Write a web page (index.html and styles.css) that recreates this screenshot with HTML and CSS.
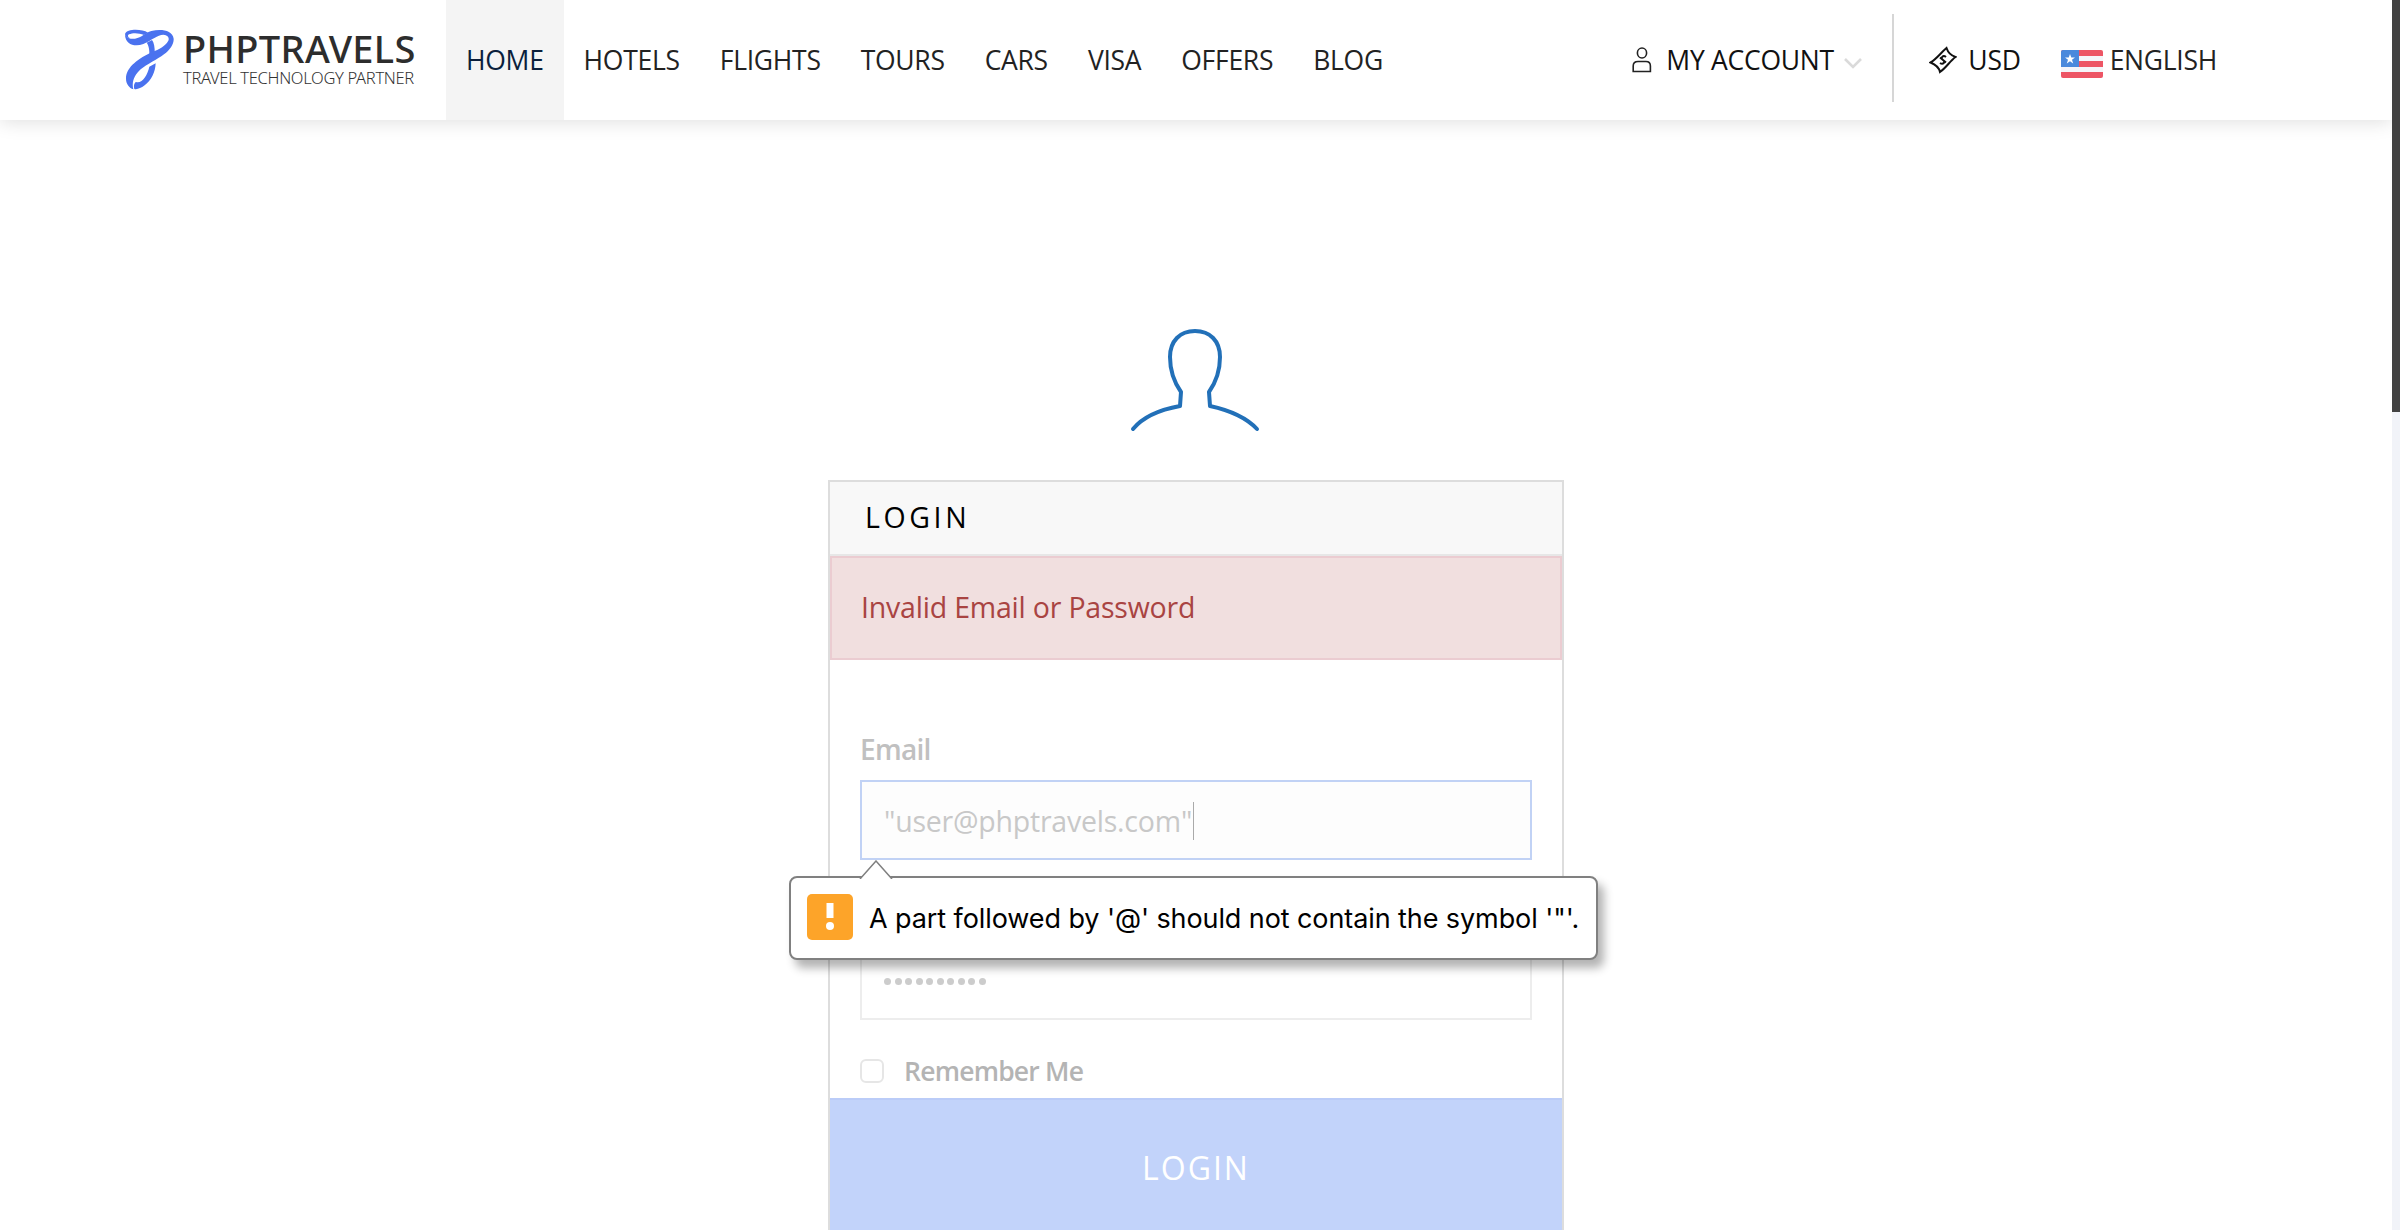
FILE: index.html
```html
<!DOCTYPE html>
<html lang="en">
<head>
<meta charset="utf-8">
<title>Login - PHPTRAVELS</title>
<link rel="stylesheet" href="styles.css">
</head>
<body>
<header class="topbar">
  <a class="logo">
    <svg class="logo-mark" viewBox="15 21 150 186" width="50" height="62" fill="#4a72ef">
      <path d="M15 38C16 68 45 76 70 66C97 54 112 38 130 38C146 39 149 50 144 58C136 72 118 82 96 91C58 108 18 135 18 170C18 186 28 198 40 202C34 180 44 158 62 142C80 127 112 112 132 97C150 84 162 66 161 50C158 24 122 20 94 27C75 32 66 47 45 50C32 51 22 49 15 38Z"/>
      <path d="M15 36C20 20 65 20 84 32L72 39C58 33 40 31 27 37C20 41 26 46 30 49C22 48 15 43 15 36Z"/>
      <path d="M80 62L96 54C102 62 105 76 104 95L88 102C89 82 86 70 80 62Z"/>
      <path d="M107 124C106 150 94 176 74 190C62 199 52 203 43 201C40 190 44 182 48 180C66 186 82 160 88 134Z"/>
    </svg>
    <span class="logo-words"><b class="logo-name">PHPTRAVELS</b><span class="logo-tag">TRAVEL TECHNOLOGY PARTNER</span></span>
  </a>
  <nav class="menu">
    <a class="active">HOME</a><a>HOTELS</a><a>FLIGHTS</a><a>TOURS</a><a>CARS</a><a>VISA</a><a>OFFERS</a><a>BLOG</a>
  </nav>
  <div class="tools">
    <a class="account">
      <svg width="20" height="26" viewBox="0 0 20 26" fill="none" stroke="#222" stroke-width="1.6"><ellipse cx="10" cy="6" rx="4.6" ry="5"/><path d="M1.2 24.5V19Q1.2 14.5 6 14.5H14Q18.4 14.5 18.4 19V24.5Z"/></svg>
      <span class="account-name">MY ACCOUNT</span>
      <svg class="chev" width="18" height="12" viewBox="0 0 18 12" fill="none" stroke="#dadada" stroke-width="2.600"><path d="M1 1L9 9L17 1"/></svg>
    </a>
    <a class="currency">
      <svg width="28" height="28" viewBox="0 0 28 28" fill="none" stroke="#111" stroke-width="2"><path d="M1.500 16.500C7 13.500 12 6.500 17.500 2C19 6.500 22 9.500 26.500 11C21 15 17 22 11 26C10 21.500 6.500 18.500 1.500 16.500Z"/><path d="M17 11C14 8.500 11 12 14 14S14 19 11 17M11 11.500L17 16.500"/></svg>
      <span>USD</span>
    </a>
    <a class="language">
      <svg width="42" height="28" viewBox="0 0 42 28"><rect width="42" height="28" rx="2" fill="#ed5565"/><path d="M18 6H42V11H18ZM0 17H42V22H0Z" fill="#f5f5f9"/><path d="M2 0H18V17H0V2Q0 0 2 0Z" fill="#4a89dc"/><path d="M9 4L10.300 7.500H14L11 9.800L12.200 13.500L9 11.300L5.800 13.500L7 9.800L4 7.500H7.700Z" fill="#fff"/></svg>
      <span>ENGLISH</span>
    </a>
  </div>
</header>
<main class="page">
  <svg class="avatar" width="132" height="108" viewBox="0 0 132 108" fill="none" stroke="#2270b8" stroke-width="4" stroke-linecap="round" stroke-linejoin="round"><path d="M4 102Q18 85 51 79L52 65C45 55 41 43 41 30C41 14 51 4 66 4S91 14 91 30C91 43 87 55 80 65L81 79Q113 86 128 102"/></svg>
  <section class="panel">
    <h1 class="panel-title">LOGIN</h1>
    <div class="alert">Invalid Email or Password</div>
    <form class="form">
      <label class="label">Email</label>
      <div class="field focused"><span class="value">"user@phptravels.com"</span><i class="caret"></i>
        <div class="bubble">
          <svg class="arrow" width="34" height="19" viewBox="0 0 34 19"><path d="M1 19L17 1L33 19" fill="#fff" stroke="#808080" stroke-width="1.5"/></svg>
          <span class="warn"><svg width="10" height="28" viewBox="0 0 10 28" fill="#fff"><path d="M1.500 0H8.500V15H1.500Z"/><circle cx="5" cy="23" r="4"/></svg></span>
          <span class="bubble-text">A part followed by '@' should not contain the symbol '"'.</span>
        </div>
      </div>
      <div class="field password"><i></i><i></i><i></i><i></i><i></i><i></i><i></i><i></i><i></i><i></i></div>
      <div class="remember"><i class="box"></i><span>Remember Me</span></div>
    </form>
    <div class="submit">LOGIN</div>
  </section>
</main>
<div class="scrollbar"><div class="thumb"></div></div>
</body>
</html>
```
FILE: styles.css
```css
* { box-sizing: border-box; }
body { margin: 0; height: 1230px; overflow: hidden; background: #fff; font-family: "Open Sans", sans-serif; color: #222; }
.topbar { display: flex; height: 120px; width: 2392px; padding-left: 125px; background: #fff; box-shadow: 0 2px 18px rgba(0,0,0,.13); }
.logo { display: flex; width: 321px; padding-top: 28px; gap: 8px; }
.logo-mark { flex: none; margin-top: 1px; }
.logo-words { display: flex; flex-direction: column; white-space: nowrap; }
.logo-name { font: 500 38px/40px "Noto Sans", sans-serif; letter-spacing: .35px; color: #2d2d2d; }
.logo-tag { font: 300 16.500px/20px "Noto Sans", sans-serif; letter-spacing: -.32px; color: #333; }
.menu { display: flex; }
.menu a { padding: 0 20px; font-size: 26.500px; line-height: 121px; letter-spacing: -.28px; }
.menu .active { background: #f4f4f4; color: #0b1f3c; }
.tools { display: flex; margin-left: auto; padding-right: 175px; font-size: 26.500px; line-height: 121px; letter-spacing: -.27px; }
.tools a { display: flex; align-items: center; }
.account { position: relative; gap: 14px; padding-right: 32px; color: #111; }
.account::after { content: ""; position: absolute; right: 0; top: 14px; width: 2px; height: 88px; background: #d6d6d6; }
.account-name { width: 166px; margin-right: -2px; white-space: nowrap; }
.chev { margin-top: 8px; }
.currency { gap: 11px; padding: 0 40px 0 35px; color: #111; font-weight: 500; }
.language { gap: 7px; }
.language svg { margin-top: 8px; }
.page { width: 2392px; display: flex; flex-direction: column; align-items: center; padding-top: 207px; }
.avatar { display: block; margin-right: 2px; }
.panel { width: 736px; height: 750px; margin-top: 45px; border: 2px solid #ddd; border-bottom: 0; background: #fff; }
.panel-title { margin: 0; height: 74px; padding-left: 35px; background: #f8f8f8; border-bottom: 2px solid #e7e7e7; color: #000; font-size: 28.500px; font-weight: 500; line-height: 71px; letter-spacing: 3.600px; }
.alert { height: 104px; padding-left: 29px; border: 2px solid #ebccd1; background: #f1dfdf; color: #a94442; font-size: 28.500px; line-height: 98px; letter-spacing: -.2px; }
.form { padding: 68px 30px 0; height: 438px; }
.label { display: block; height: 52px; font-size: 28px; line-height: 42px; font-weight: 600; letter-spacing: -.7px; color: #c0c0c0; }
.field { position: relative; display: flex; align-items: center; width: 672px; height: 80px; border: 2px solid #ededed; padding-left: 22px; }
.focused { background: #fdfdfd; border-color: #c1d2f5; z-index: 1; }
.value { padding-top: 2px; font-size: 28.500px; letter-spacing: -.22px; color: #c8c8c8; }
.caret { width: 1px; height: 38px; margin: 2px 0 0 1px; background: #aaa; }
.bubble { position: absolute; left: -73px; top: 94px; width: 809px; height: 84px; display: flex; align-items: center; gap: 16px; padding-left: 16px; border: 2px solid #808080; border-radius: 8px; background: #fff; box-shadow: 6px 8px 10px rgba(0,0,0,.3); }
.arrow { position: absolute; left: 68px; top: -18px; }
.warn { display: flex; align-items: center; justify-content: center; width: 46px; height: 46px; margin-bottom: 2px; border-radius: 5px; background: #fda429; }
.bubble-text { font: 27px Inter, sans-serif; letter-spacing: -.09px; color: #000; white-space: nowrap; }
.password { margin-top: 80px; gap: 3.500px; padding-top: 2px; }
.password i { width: 7px; height: 7px; border-radius: 50%; background: #ccc; }
.remember { display: flex; align-items: center; gap: 20px; margin-top: 30px; height: 42px; font-size: 26.500px; font-weight: 600; letter-spacing: -.78px; color: #b4b4b4; }
.remember span { margin-top: -1px; }
.box { width: 24px; height: 24px; border: 2px solid #e6e6e6; border-radius: 6px; }
.submit { height: 132px; border-top: 2px solid #bbccf8; background: #c2d3fa; color: #fff; font-size: 32px; line-height: 136px; text-align: center; letter-spacing: 2px; }
.scrollbar { position: absolute; right: 0; top: 0; width: 8px; height: 1230px; background: #f1f3f8; }
.thumb { height: 412px; background: #424242; }
```
